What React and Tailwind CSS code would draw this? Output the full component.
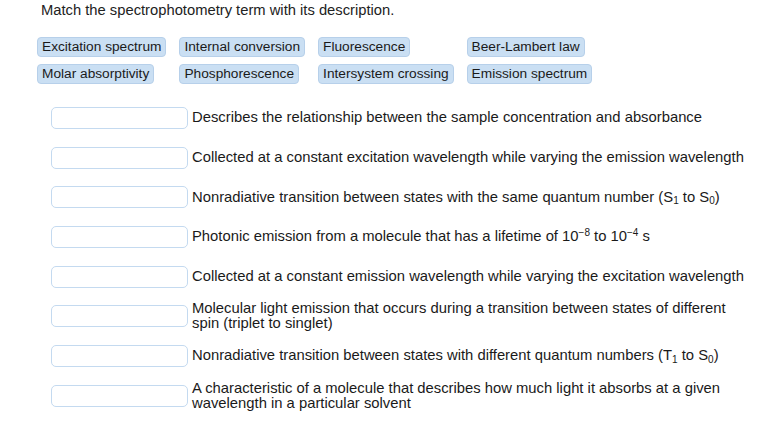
const terms = [
  'Excitation spectrum',
  'Internal conversion',
  'Fluorescence',
  'Beer-Lambert law',
  'Molar absorptivity',
  'Phosphorescence',
  'Intersystem crossing',
  'Emission spectrum',
];

const rows = [
  <>Describes the relationship between the sample concentration and absorbance</>,
  <>Collected at a constant excitation wavelength while varying the emission wavelength</>,
  <>
    Nonradiative transition between states with the same quantum number (S<sub className="text-[10px]">1</sub> to S
    <sub className="text-[10px]">0</sub>)
  </>,
  <>
    Photonic emission from a molecule that has a lifetime of 10<sup className="text-[10px]">−8</sup> to 10
    <sup className="text-[10px]">−4</sup> s
  </>,
  <>Collected at a constant emission wavelength while varying the excitation wavelength</>,
  <>Molecular light emission that occurs during a transition between states of different spin (triplet to singlet)</>,
  <>
    Nonradiative transition between states with different quantum numbers (T<sub className="text-[10px]">1</sub> to S
    <sub className="text-[10px]">0</sub>)
  </>,
  <>A characteristic of a molecule that describes how much light it absorbs at a given wavelength in a particular solvent</>,
];

export default function App() {
  return (
    <div
      className="w-[761px] h-[438px] bg-white text-[#1a1a1a] overflow-hidden"
      style={{ fontFamily: '"Liberation Sans", Arial, sans-serif' }}
    >
      <div className="pl-[41px] pt-[1px] text-[14.75px] leading-[18px] text-[#222]">
        Match the spectrophotometry term with its description.
      </div>

      {/* term bank */}
      <div className="mt-[18px] ml-[37px] grid grid-cols-[repeat(4,auto)] justify-start justify-items-start gap-x-[13px] gap-y-[7px]">
        {terms.map((t) => (
          <div
            key={t}
            className="h-[20px] px-[4px] flex items-center rounded-[4px] bg-[#cadff3] border border-[#b7d0ea] text-[13.7px] leading-none whitespace-nowrap"
          >
            {t}
          </div>
        ))}
      </div>

      {/* matching rows */}
      <div className="mt-[14px] flex flex-col">
        {rows.map((desc, i) => (
          <div key={i} className="h-[39.7px] flex items-center">
            <div className="ml-[51px] w-[137px] h-[22px] rounded-[5px] border border-[#c4daf0] bg-white shrink-0" />
            <div className="ml-[4px] w-[556px] text-[14.8px] leading-[15px]">{desc}</div>
          </div>
        ))}
      </div>
    </div>
  );
}
